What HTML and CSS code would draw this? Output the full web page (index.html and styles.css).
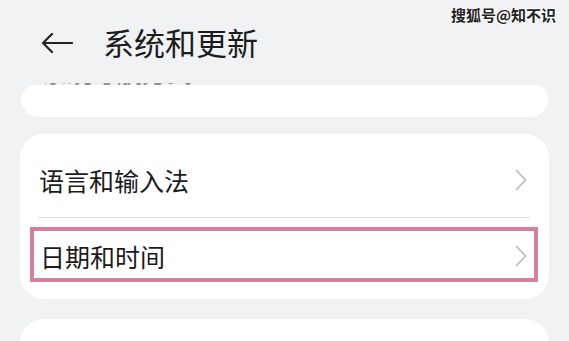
FILE: index.html
```html
<!DOCTYPE html>
<html lang="zh">
<head>
<meta charset="utf-8">
<link rel="stylesheet" href="styles.css">
</head>
<body>
<div class="screen">
  <div class="header">
    <svg class="back" width="32" height="20" viewBox="0 0 32 20">
      <path d="M31 10 H2 M11 1 L2 10 L11 19" fill="none" stroke="#222" stroke-width="2.2" stroke-linecap="round" stroke-linejoin="round"/>
    </svg>
    <div class="title">系统和更新</div>
  </div>
  <div class="watermark">搜狐号@知不识</div>
  <div class="clip"><div class="clip-text">系统导航方式</div></div>
  <div class="card card-top"></div>
  <div class="card card-main">
    <div class="row row-first">
      <span class="label">语言和输入法</span>
      <svg class="chev" width="12" height="22" viewBox="0 0 12 22"><polyline points="1.5,1.5 10.5,11 1.5,20.5" fill="none" stroke="#bcbcbc" stroke-width="1.8" stroke-linecap="round" stroke-linejoin="round"/></svg>
    </div>
    <div class="divider"></div>
    <div class="row row-hl">
      <span class="label">日期和时间</span>
      <svg class="chev" width="12" height="22" viewBox="0 0 12 22"><polyline points="1.5,1.5 10.5,11 1.5,20.5" fill="none" stroke="#bcbcbc" stroke-width="1.8" stroke-linecap="round" stroke-linejoin="round"/></svg>
    </div>
  </div>
  <div class="card card-bottom"></div>
</div>
</body>
</html>
```
FILE: styles.css
```css
html, body {
  margin: 0;
  padding: 0;
  background: #f1f2f4;
}
.screen {
  position: relative;
  width: 569px;
  height: 341px;
  overflow: hidden;
  background: #f1f2f4;
  font-family: "Noto Sans CJK SC", "Noto Sans", sans-serif;
  color: #1b1b1b;
}
.header {
  height: 83px;
  display: flex;
  align-items: center;
  padding-left: 41px;
}
.back {
  display: block;
  margin-right: 30px;
  margin-top: 2px;
}
.title {
  font-size: 31px;
  line-height: 40px;
  color: #1c1c1c;
}
.watermark {
  position: absolute;
  top: 5px;
  right: 13px;
  font-size: 15px;
  line-height: 20px;
  font-weight: 700;
  color: #222;
  text-shadow: 1px 0 #fff, -1px 0 #fff, 0 1px #fff, 0 -1px #fff;
}
.clip {
  height: 2px;
  overflow: hidden;
  margin: 0 20px;
}
.clip-text {
  font-size: 25px;
  line-height: 25px;
  margin-top: -23px;
  padding-left: 22px;
  color: #8a8a8a;
}
.card {
  background: #fff;
  margin: 0 20px;
  border-radius: 24px;
}
.card-top {
  height: 32px;
  margin: 0 21px 0 21px;
  border-radius: 16px 14px 20px 20px;
}
.card-main {
  margin-top: 17px;
  height: 165px;
  box-sizing: border-box;
  width: 529px;
}
.row {
  display: flex;
  align-items: center;
  justify-content: space-between;
}
.label {
  font-size: 25px;
  line-height: 30px;
}
.chev {
  display: block;
}
.row-first {
  height: 75px;
  padding: 8px 22px 0 19px;
}
.divider {
  height: 1px;
  background: #dedede;
  margin: 0 19px 0 18px;
}
.row-hl {
  margin: 9px 11px 0 10px;
  height: 47px;
  border: 4px solid #d97e9e;
  padding: 0 7px 0 6px;
}
.row-hl .label {
  margin-top: 2px;
}
.row-hl .chev {
  margin-top: 2px;
}
.card-bottom {
  margin-top: 20px;
  height: 60px;
  width: 529px;
}
```
